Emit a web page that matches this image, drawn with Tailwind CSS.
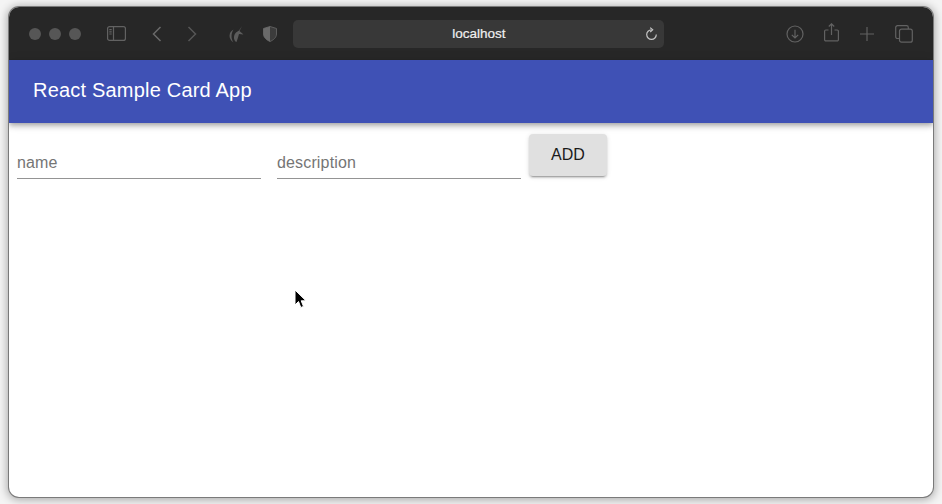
<!DOCTYPE html>
<html lang="en">
  <head>
    <meta charset="UTF-8" />
    <title>React Sample Card App</title>
    <script src="https://cdn.jsdelivr.net/npm/@tailwindcss/browser@4"></script>
  </head>
  <body class="h-[504px] w-[942px] overflow-hidden bg-[#f4f4f4] font-['Liberation_Sans',Arial,sans-serif]">
    <div class="h-full px-[9px] pt-[7px] pb-[7px]">
      <!-- BROWSER WINDOW -->
      <div class="relative flex h-full flex-col overflow-hidden rounded-[10px] bg-white shadow-[0_0_0_1px_#7a7a7a,0_1px_8px_2px_rgba(0,0,0,0.3)]">
        <!-- TOOLBAR -->
        <div class="flex h-[53px] shrink-0 items-center bg-[#272727] pl-[20px]">
          <div class="flex gap-[8px]">
            <div class="h-[12px] w-[12px] rounded-full bg-[#565656]"></div>
            <div class="h-[12px] w-[12px] rounded-full bg-[#565656]"></div>
            <div class="h-[12px] w-[12px] rounded-full bg-[#565656]"></div>
          </div>
          <svg class="ml-[26px]" width="19" height="15" viewBox="0 0 19 15" fill="none" stroke="#626262" stroke-width="1.2">
            <rect x="0.6" y="0.6" width="17.8" height="13.8" rx="2" />
            <path d="M6.5 0.6v13.8M2.3 3.6h2.4M2.3 5.8h2.4M2.3 8h2.4" />
          </svg>
          <svg class="ml-[26px]" width="10" height="16" viewBox="0 0 10 16" fill="none" stroke="#6a6a6a" stroke-width="1.5">
            <path d="M8.5 1L1.5 8l7 7" />
          </svg>
          <svg class="ml-[25px]" width="10" height="16" viewBox="0 0 10 16" fill="none" stroke="#565656" stroke-width="1.5">
            <path d="M1.5 1l7 7-7 7" />
          </svg>
          <svg class="ml-[31px]" width="16" height="18" viewBox="0 0 16 18" fill="#5c5c5c">
            <path d="M14 1L11.500 6 15.500 9.500 11 9 10 12.500 8.500 17C5.500 16 5 10.500 8 7.500L11 5.500Z" />
            <path d="M5.500 4.500C0.500 7 0 14 5.500 17.500 2.800 13.500 3 8.500 5.500 4.500Z" />
          </svg>
          <svg class="ml-[19px]" width="14" height="16" viewBox="0 0 14 16">
            <path d="M7 0.500L13.500 2.500V8C13.500 11.500 10.500 14 7 15.500 3.500 14 0.500 11.500 0.500 8V2.500Z" fill="#3c3c3c" stroke="#5e5e5e" stroke-width="1" />
            <path d="M7 0.500V15.500C3.500 14 0.500 11.500 0.500 8V2.500Z" fill="#6a6a6a" />
          </svg>
          <!-- URL BAR -->
          <div class="ml-[16px] flex h-[28px] w-[371px] items-center rounded-[5px] bg-[#383838] pr-[6px] pl-[20px]">
            <span class="flex-1 text-center text-[13.5px] leading-none text-[#f0f0f0] [-webkit-text-stroke:0.2px_#f0f0f0]">localhost</span>
            <svg width="13" height="14" viewBox="0 0 13 14" fill="none" stroke="#c4c4c4" stroke-width="1.2">
              <path d="M6.500 2.800a4.800 4.800 0 1 0 4.800 4.800" />
              <path d="M5.200 0.600l2.500 2.200-2.500 2.200" />
            </svg>
          </div>
          <!-- RIGHT ICONS -->
          <svg class="ml-[122px]" width="18" height="18" viewBox="0 0 18 18" fill="none" stroke="#626262" stroke-width="1.2">
            <circle cx="9" cy="9" r="8" />
            <path d="M9 4.800v8M5.800 9.800L9 13l3.200-3.200" />
          </svg>
          <svg class="mb-[3px] ml-[20px]" width="15" height="19" viewBox="0 0 15 19" fill="none" stroke="#626262" stroke-width="1.2">
            <path d="M4.500 7H1.800a1.200 1.200 0 0 0-1.200 1.200v8.500a1.200 1.200 0 0 0 1.200 1.200h11.400a1.200 1.200 0 0 0 1.200-1.200V8.200A1.200 1.200 0 0 0 13.200 7H10.500" />
            <path d="M7.500 12V1M4.800 3.500L7.500 0.800l2.700 2.700" />
          </svg>
          <svg class="ml-[21px]" width="14" height="14" viewBox="0 0 14 14" fill="none" stroke="#626262" stroke-width="1.2">
            <path d="M7 0v14M0 7h14" />
          </svg>
          <svg class="ml-[21px]" width="18" height="18" viewBox="0 0 18 18" fill="none" stroke="#626262" stroke-width="1.2">
            <path d="M4 13.500H2.500A1.800 1.800 0 0 1 0.700 11.700V2.500A1.800 1.800 0 0 1 2.500 0.700H11.500A1.800 1.800 0 0 1 13.300 2.500V4" />
            <rect x="4.500" y="4.200" width="12.800" height="13" rx="2" />
          </svg>
        </div>

        <!-- APP BAR -->
        <header class="z-10 flex h-[63px] shrink-0 items-center bg-[#3f51b5] pb-[4px] pl-[24px] shadow-[0_2px_4px_-1px_rgba(0,0,0,0.2),0_4px_5px_0_rgba(0,0,0,0.14),0_1px_10px_0_rgba(0,0,0,0.12)]">
          <h1 class="text-[20px] leading-none font-normal tracking-[0.2px] text-white">React Sample Card App</h1>
        </header>

        <!-- FORM -->
        <main class="flex flex-1 items-start pl-[8px]">
          <div class="mt-[29px] w-[244px] border-b border-[#949494] pb-[4px]">
            <input placeholder="name" class="block h-[22px] w-full bg-transparent text-[16px] tracking-[0.15px] outline-none placeholder:text-[#757575]" />
          </div>
          <div class="mt-[29px] ml-[16px] w-[244px] border-b border-[#949494] pb-[4px]">
            <input placeholder="description" class="block h-[22px] w-full bg-transparent text-[16px] tracking-[0.15px] outline-none placeholder:text-[#757575]" />
          </div>
          <button class="mt-[11px] ml-[8px] h-[42px] w-[78px] rounded-[4px] bg-[#e0e0e0] text-[16px] text-[#1a1a1a] shadow-[0_3px_1px_-2px_rgba(0,0,0,0.2),0_2px_2px_0_rgba(0,0,0,0.14),0_1px_5px_0_rgba(0,0,0,0.12)]">ADD</button>
        </main>

        <!-- CURSOR -->
        <svg class="absolute top-[282px] left-[285px] z-20" width="13" height="20" viewBox="0 0 13 20">
          <path d="M1 1v15l3.500-3.500 2.300 6 2.700-1.100-2.300-5.600h4.800Z" fill="#000" stroke="#fff" stroke-width="1" />
        </svg>
      </div>
    </div>
  </body>
</html>
